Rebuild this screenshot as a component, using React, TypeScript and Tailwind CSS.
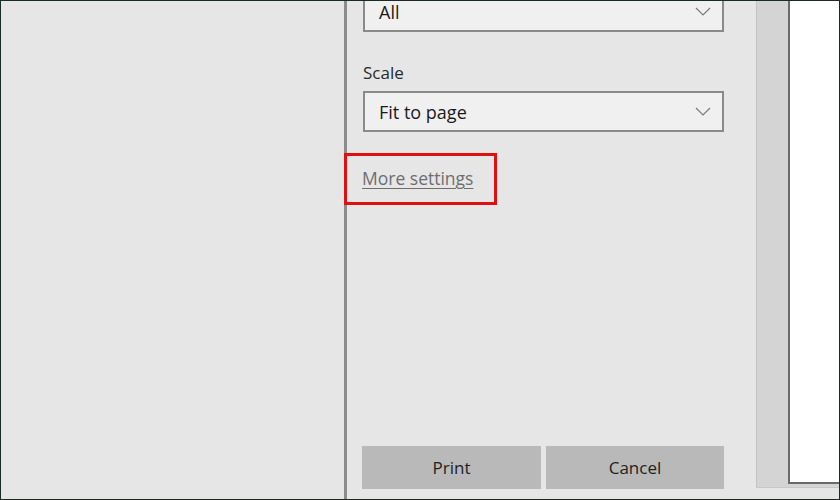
const font = { fontFamily: '"Open Sans", "Noto Sans", sans-serif' }

const Chevron = () => (
    <svg width="16" height="9" viewBox="0 0 16 9" fill="none" className="text-[#7a7a7a]">
        <path d="M1 1l7 7 7-7" stroke="currentColor" strokeWidth="1.2" />
    </svg>
)

const Dropdown = ({ value, className }: { value: string; className?: string }) => (
    <div className={"flex items-center justify-between h-[41px] border-2 border-[#8a8a8a] bg-[#f0f0f0] pl-[14px] pr-[11px] " + (className ?? "")}>
        <span className="text-[18px] text-[#1a1a1a] leading-none">{value}</span>
        <Chevron />
    </div>
)

const App = () => {
    return (
        <div
            className="w-[840px] h-[500px] overflow-hidden border border-[#1c2a24] bg-[#e6e6e6] flex"
            style={font}
        >
            {/* page behind the dialog */}
            <div className="w-[343px] shrink-0 bg-[#e6e6e6]" />
            <div className="w-[3px] shrink-0 bg-[#8c8c8c]" />

            {/* settings column */}
            <div className="flex-1 flex min-w-0">
                <div className="w-[409px] shrink-0 flex flex-col pl-[16px] pr-[32px] pb-[10px]">
                    <Dropdown value="All" className="-mt-[10px]" />
                    <div className="mt-[32px] text-[17px] text-[#2a2a2a] leading-none">Scale</div>
                    <Dropdown value="Fit to page" className="mt-[10px]" />

                    <div className="mt-[21px] -ml-[19px] w-[153px] h-[52px] border-[3px] border-[#e01010] flex items-center pl-[15px]">
                        <a className="text-[17.5px] text-[#6e6e6e] underline underline-offset-[3px] decoration-[1px] whitespace-nowrap leading-none">
                            More settings
                        </a>
                    </div>

                    <div className="mt-auto -ml-[1px] flex gap-[5px]">
                        <button className="w-[179px] h-[43px] bg-[#b9b9b9] text-[17px] text-[#222]">Print</button>
                        <button className="w-[178px] h-[43px] bg-[#b9b9b9] text-[17px] text-[#222]">Cancel</button>
                    </div>
                </div>

                {/* preview */}
                <div className="flex-1 flex flex-col">
                    <div className="h-[487px] flex border-l border-[#c4c4c4] bg-[#d4d4d4] pl-[31px] border-b border-b-[#c8c8c8]">
                        <div className="flex-1 h-[483px] bg-white border-l-2 border-b-2 border-[#6a6a6a]" />
                    </div>
                </div>
            </div>
        </div>
    )
}

export default App
